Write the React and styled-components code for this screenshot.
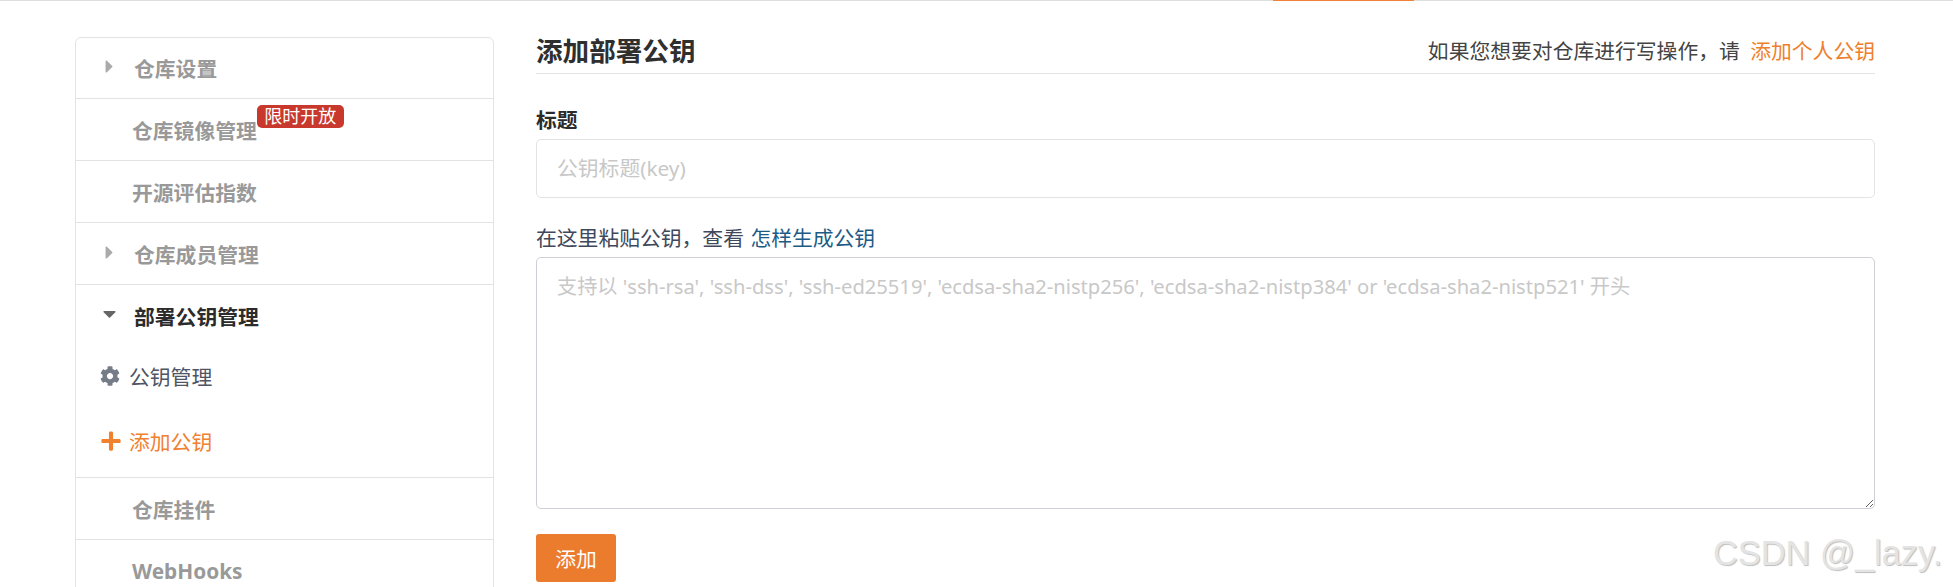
import React from 'react';
import styled, { createGlobalStyle } from 'styled-components';
import { FaCaretRight, FaCaretDown, FaCog, FaPlus } from 'react-icons/fa';

const GlobalStyle = createGlobalStyle`
  html, body {
    margin: 0;
    height: 587px;
    overflow: hidden;
    background: #fff;
  }
  body {
    font-family: "Noto Sans", "Noto Sans CJK SC", sans-serif;
    font-size: 20.8px;
    color: #40485b;
  }
`;

const Page = styled.div`
  position: relative;
  height: 587px;
  overflow: hidden;
`;

const TopLine = styled.div`
  height: 1px;
  background: #dedede;
  padding-left: 1273px;
`;

const ActiveTab = styled.div`
  width: 141px;
  height: 1px;
  background: #f1803a;
`;

const Layout = styled.div`
  display: flex;
  align-items: flex-start;
  padding-left: 75px;
`;

const Sidebar = styled.nav`
  width: 419px;
  box-sizing: border-box;
  margin-top: 36px;
  border: 1px solid #e3e3e3;
  border-radius: 6px;
  flex-shrink: 0;
`;

const Row = styled.div`
  height: 62px;
  display: flex;
  align-items: center;
  box-sizing: border-box;
  padding-left: ${(p) => (p.$caret ? '23px' : '56px')};
  border-bottom: 1px solid #e3e3e3;
  font-weight: 700;
  color: #999;

  &:first-child {
    height: 61px;
  }

  &:last-child {
    border-bottom: none;
  }
`;

const Caret = styled.span`
  display: flex;
  width: 35px;
  margin-bottom: 3px;
  font-size: 21px;
  color: #aaa;
`;

const Badge = styled.span`
  align-self: flex-start;
  margin-top: 6px;
  height: 23px;
  line-height: 23px;
  padding: 0 7.5px;
  background: #c9382c;
  color: #fff;
  font-size: 18px;
  font-weight: 400;
  border-radius: 5px;
`;

const Group = styled.div`
  border-bottom: 1px solid #e3e3e3;
  height: 192px;
`;

const GroupHead = styled.div`
  height: 61px;
  box-sizing: border-box;
  padding: 1px 0 0 23px;
  display: flex;
  align-items: center;
  font-weight: 700;
  color: #2b2b2b;
`;

const DownCaret = styled.span`
  display: flex;
  width: 35px;
  margin-bottom: 5px;
  font-size: 21px;
  color: #666;
`;

const SubItem = styled.div`
  height: ${(p) => p.$h}px;
  display: flex;
  align-items: center;
  padding-left: 24px;
  color: ${(p) => (p.$active ? '#f0812f' : '#4f5564')};
`;

const SubIcon = styled.span`
  display: flex;
  width: 29px;
  font-size: ${(p) => (p.$active ? 22 : 20)}px;
  color: ${(p) => (p.$active ? '#f0812f' : '#767b88')};
`;

const Main = styled.main`
  width: 1339px;
  margin-left: 42px;
  flex-shrink: 0;
`;

const Header = styled.div`
  height: 73px;
  box-sizing: border-box;
  display: flex;
  align-items: center;
  justify-content: space-between;
  padding-top: 25px;
  border-bottom: 1px solid #e3e3e3;
`;

const Title = styled.h2`
  margin: 0;
  font-size: 26.6px;
  font-weight: 700;
  color: #2f2f2f;
`;

const HeaderNote = styled.div`
  color: #444;
  word-spacing: 5px;
`;

const OrangeLink = styled.a`
  color: #ee7f2d;
`;

const BlueLink = styled.a`
  color: #1d5b87;
`;

const Field = styled.div`
  display: flex;
  flex-direction: column;
  margin-top: ${(p) => p.$top}px;
`;

const FieldLabel = styled.label`
  height: 28px;
  line-height: 28px;
  margin-bottom: 5px;
  word-spacing: 1px;
  font-weight: ${(p) => (p.$bold ? 700 : 400)};
  color: ${(p) => (p.$bold ? '#2b2b2b' : '#40485b')};
`;

const TitleInput = styled.input`
  height: 59px;
  box-sizing: border-box;
  padding: 0 20px 2px;
  border: 1px solid #e3e3e6;
  border-radius: 5px;
  font: inherit;
  outline: none;

  &::placeholder {
    color: #c8c8c8;
  }
`;

const KeyArea = styled.textarea`
  height: 252px;
  box-sizing: border-box;
  padding: 13px 20px;
  border: 1px solid #cfcfd6;
  border-radius: 5px;
  font: inherit;
  font-size: 20.16px;
  outline: none;
  resize: vertical;

  &::placeholder {
    color: #c8c8c8;
  }
`;

const SubmitButton = styled.button`
  display: block;
  width: 80px;
  height: 48px;
  margin-top: 25px;
  padding: 0;
  background: #eb7b2d;
  color: #fff;
  border: none;
  border-radius: 3px;
  font: inherit;
`;

const Watermark = styled.div`
  position: absolute;
  left: 1713px;
  top: 534px;
  font-family: "Liberation Sans", sans-serif;
  font-size: 34.4px;
  color: #e4e4e4;
  text-shadow: 1px 1px 1px #bdbdbd;
  white-space: nowrap;
`;

const App = () => {
  return (
    <Page>
      <GlobalStyle />
      <TopLine>
        <ActiveTab />
      </TopLine>
      <Layout>
        <Sidebar>
          <Row $caret>
            <Caret><FaCaretRight /></Caret>
            仓库设置
          </Row>
          <Row>
            仓库镜像管理
            <Badge>限时开放</Badge>
          </Row>
          <Row>开源评估指数</Row>
          <Row $caret>
            <Caret><FaCaretRight /></Caret>
            仓库成员管理
          </Row>
          <Group>
            <GroupHead>
              <DownCaret><FaCaretDown /></DownCaret>
              部署公钥管理
            </GroupHead>
            <SubItem $h={60}>
              <SubIcon><FaCog /></SubIcon>
              公钥管理
            </SubItem>
            <SubItem $h={70} $active>
              <SubIcon $active><FaPlus /></SubIcon>
              添加公钥
            </SubItem>
          </Group>
          <Row>仓库挂件</Row>
          <Row>WebHooks</Row>
        </Sidebar>
        <Main>
          <Header>
            <Title>添加部署公钥</Title>
            <HeaderNote>
              如果您想要对仓库进行写操作，请 <OrangeLink>添加个人公钥</OrangeLink>
            </HeaderNote>
          </Header>
          <Field $top={32}>
            <FieldLabel $bold>标题</FieldLabel>
            <TitleInput placeholder="公钥标题(key)" />
          </Field>
          <Field $top={26}>
            <FieldLabel>
              在这里粘贴公钥，查看 <BlueLink>怎样生成公钥</BlueLink>
            </FieldLabel>
            <KeyArea placeholder="支持以 'ssh-rsa', 'ssh-dss', 'ssh-ed25519', 'ecdsa-sha2-nistp256', 'ecdsa-sha2-nistp384' or 'ecdsa-sha2-nistp521' 开头" />
          </Field>
          <SubmitButton>添加</SubmitButton>
        </Main>
      </Layout>
      <Watermark>CSDN @_lazy.</Watermark>
    </Page>
  );
};

export default App;
